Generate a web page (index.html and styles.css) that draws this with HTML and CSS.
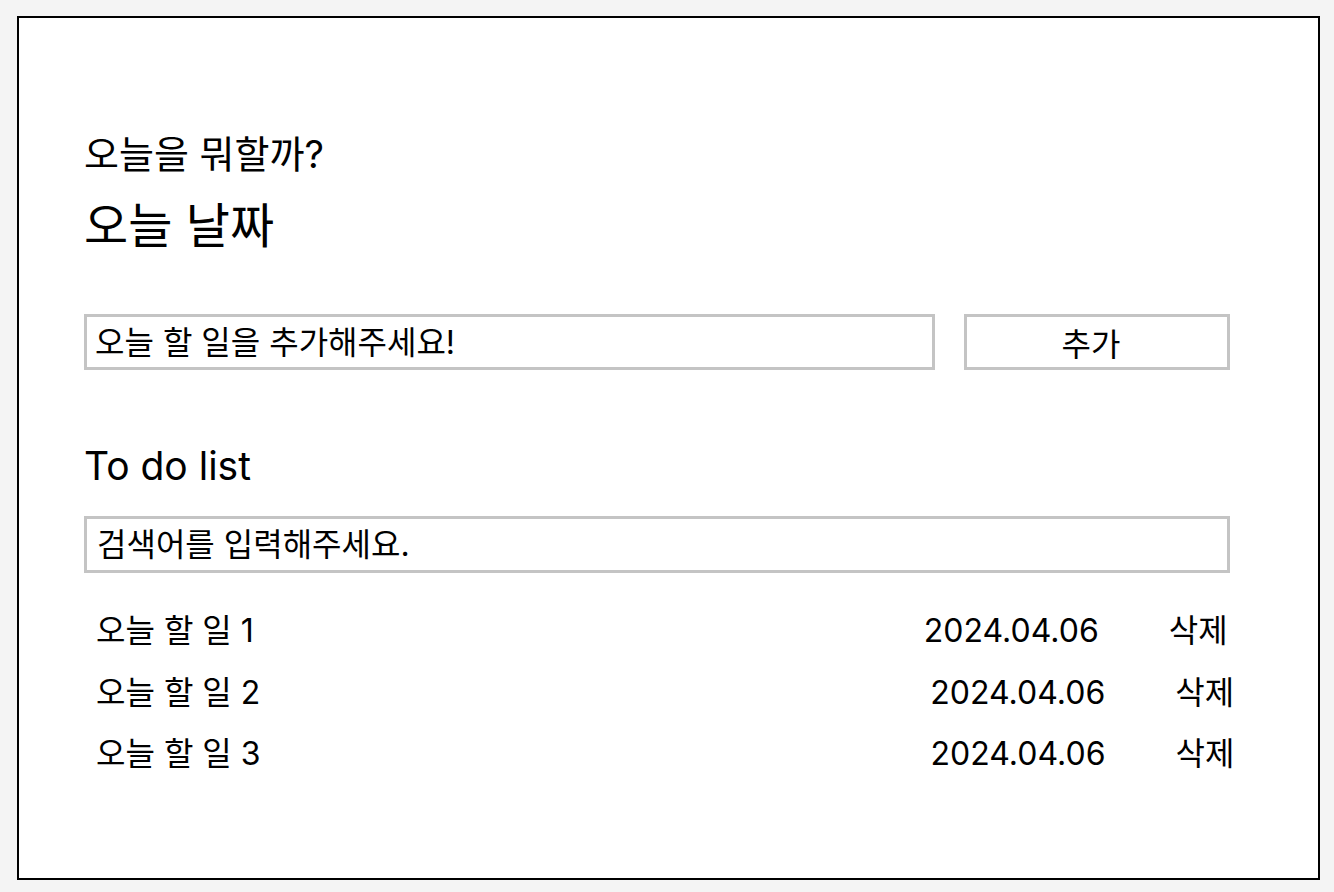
FILE: index.html
```html
<!DOCTYPE html>
<html lang="ko">
<head>
<meta charset="utf-8">
<title>To do</title>
<link rel="stylesheet" href="styles.css">
</head>
<body>
<div class="app">
  <h1 class="title">오늘을 뭐할까?</h1>
  <h2 class="date-title">오늘 날짜</h2>
  <form class="add-form">
    <input class="field add-field" type="text" placeholder="오늘 할 일을 추가해주세요!">
    <button class="add-btn" type="button">추가</button>
  </form>
  <h3 class="list-title">To do list</h3>
  <input class="field search-field" type="text" placeholder="검색어를 입력해주세요.">
  <ul class="todo-list">
    <li class="todo-item"><span class="todo-text">오늘 할 일 1</span><span class="todo-date">2024.04.06</span><span class="todo-del">삭제</span></li>
    <li class="todo-item"><span class="todo-text">오늘 할 일 2</span><span class="todo-date">2024.04.06</span><span class="todo-del">삭제</span></li>
    <li class="todo-item"><span class="todo-text">오늘 할 일 3</span><span class="todo-date">2024.04.06</span><span class="todo-del">삭제</span></li>
  </ul>
</div>
</body>
</html>
```
FILE: styles.css
```css
* { box-sizing: border-box; }
html, body { margin: 0; padding: 0; }
body {
  background: #f4f4f4;
  font-family: Inter, "Noto Sans CJK KR", sans-serif;
  color: #000;
  padding: 16px 0 0 17px;
}
.app {
  width: 1303px;
  height: 864px;
  border: 2px solid #000;
  background: #fff;
  padding: 116px 88px 0 65px;
  display: flex;
  flex-direction: column;
}
.title {
  margin: 0;
  font-size: 38px;
  font-weight: 400;
  line-height: 40px;
}
.date-title {
  margin: 28px 0 0;
  font-size: 48px;
  font-weight: 400;
  line-height: 48px;
}
.add-form {
  margin: 64px 0 0;
  display: flex;
  gap: 29px;
}
.field {
  height: 56px;
  border: 3px solid #c4c4c4;
  background: #fff;
  font-family: inherit;
  font-size: 32px;
  padding: 0 8px;
  outline: none;
  color: #000;
}
.field::placeholder { color: #000; opacity: 1; }
.add-field { width: 851px; }
.add-btn {
  width: 266px;
  height: 56px;
  border: 3px solid #c4c4c4;
  background: #fff;
  font-family: inherit;
  font-size: 32px;
  color: #000;
  padding: 0 12px 0 0;
}
.list-title {
  margin: 74px 0 0;
  font-size: 39px;
  font-weight: 400;
  line-height: 44px;
}
.search-field {
  margin-top: 28px;
  width: 1146px;
  height: 57px;
  padding-left: 10px;
}
.todo-list {
  list-style: none;
  margin: 27px 0 0;
  padding: 0 0 0 12px;
}
.todo-item {
  display: flex;
  font-size: 32px;
  line-height: 61.5px;
  height: 61.5px;
  white-space: nowrap;
}
.todo-item > span { flex-shrink: 0; }
.todo-date { margin-left: 670px; }
.todo-del { margin-left: 70px; }
```
